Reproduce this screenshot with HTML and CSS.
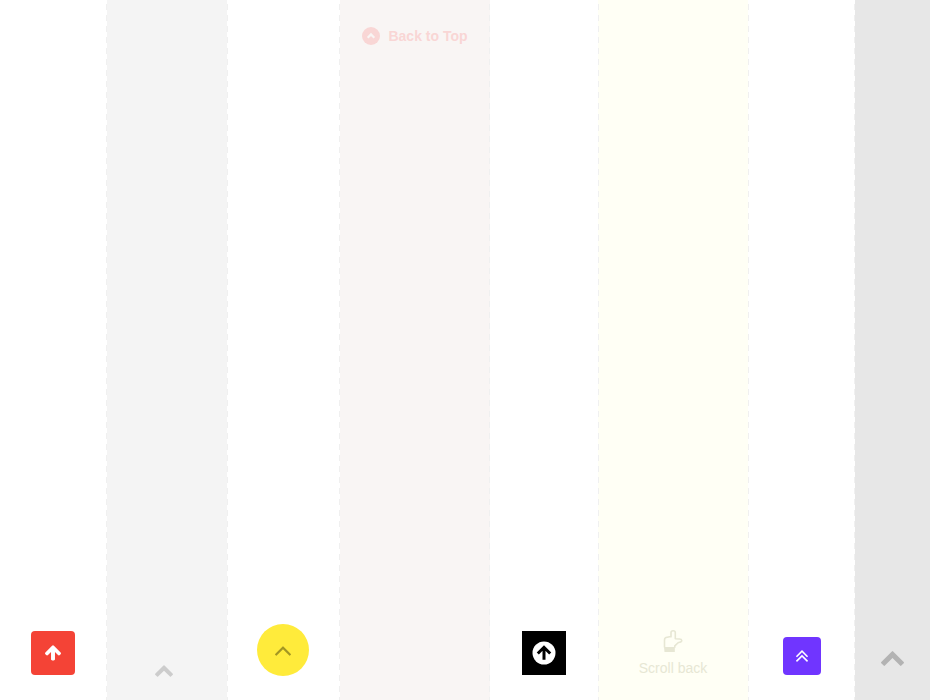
FILE: index.html
```html
<!DOCTYPE html>
<html lang="en">
<head>
<meta charset="utf-8">
<title>Back to top buttons</title>
<link rel="stylesheet" href="styles.css">
</head>
<body>
<main class="columns">
  <section class="column dash-right">
    <a class="button red"><svg width="16" height="16" viewBox="117 160 1558 1558"><path d="M1675 971q0 51-37 90l-75 75q-38 38-91 38-54 0-90-38l-294-293v704q0 52-37.5 84.5t-90.5 32.5h-128q-53 0-90.5-32.5t-37.5-84.5v-704l-294 293q-36 38-90 38t-90-38l-75-75q-38-38-38-90 0-53 38-91l651-651q35-37 90-37 54 0 91 37l651 651q37 39 37 91z"/></svg></a>
  </section>
  <section class="column gray dash-right">
    <a class="plain"><svg width="18" height="12" viewBox="90 480 1612 1036"><path d="M1683 1331l-166 165q-19 19-45 19t-45-19l-531-531-531 531q-19 19-45 19t-45-19l-166-165q-19-19-19-45.500t19-45.500l742-741q19-19 45-19t45 19l742 741q19 19 19 45.500t-19 45.500z"/></svg></a>
  </section>
  <section class="column dash-right">
    <a class="button yellow"><svg width="16" height="10" viewBox="397 670 998 610"><path d="M1395 1184q0 13-10 23l-50 50q-10 10-23 10t-23-10l-393-393-393 393q-10 10-23 10t-23-10l-50-50q-10-10-10-23t10-23l466-466q10-10 23-10t23 10l466 466q10 10 10 23z"/></svg></a>
  </section>
  <section class="column pink dash-right">
    <a class="label"><svg width="18" height="18" viewBox="0 0 18 18"><circle cx="9" cy="9" r="9"/><path class="cutout" d="m5.700 10.700 3.300-3.300 3.300 3.300" stroke-width="2.200"/></svg><span>Back to Top</span></a>
  </section>
  <section class="column">
    <a class="button black"><svg width="24" height="24" viewBox="0 0 24 24"><circle cx="12" cy="12" r="11.500"/><path class="cutout" d="m5.800 12.500 6.200-6.200 6.200 6.200M12 7v11.700" stroke-width="3"/></svg></a>
  </section>
  <section class="column ivory dash-left dash-right">
    <a class="scroll"><svg width="20" height="23" viewBox="0 0 20 23"><path d="M1.500 17.500V10c0-1.800 1.200-2.700 2.700-2.700.9-.6 2.200-.7 3.800-.5V2.600C8 .2 12.300.2 12.300 2.600v6.200l4.200.2c2.800.1 2.900 2.700.8 3.100l-2.200.6-3.300 3.200v1.800" fill="none" stroke="#e7e7d4" stroke-width="1.600" stroke-linejoin="round"/><path d="M1 17h10.800v5H1.500z"/></svg><span>Scroll back</span></a>
  </section>
  <section class="column dash-right">
    <a class="button purple"><svg width="12" height="12" viewBox="397 421 998 982"><path d="M1395 1312q0 13-10 23l-50 50q-10 10-23 10t-23-10l-393-393-393 393q-10 10-23 10t-23-10l-50-50q-10-10-10-23t10-23l466-466q10-10 23-10t23 10l466 466q10 10 10 23zm0-384q0 13-10 23l-50 50q-10 10-23 10t-23-10l-393-393-393 393q-10 10-23 10t-23-10l-50-50q-10-10-10-23t10-23l466-466q10-10 23-10t23 10l466 466q10 10 10 23z"/></svg></a>
  </section>
  <section class="column silver">
    <a class="plain large"><svg width="23" height="15" viewBox="90 480 1612 1036"><path d="M1683 1331l-166 165q-19 19-45 19t-45-19l-531-531-531 531q-19 19-45 19t-45-19l-166-165q-19-19-19-45.500t19-45.500l742-741q19-19 45-19t45 19l742 741q19 19 19 45.500t-19 45.500z"/></svg></a>
  </section>
</main>
</body>
</html>
```
FILE: styles.css
```css
* { box-sizing: border-box; }
body { margin: 0; background: #fff; font-family: "Liberation Sans", Arial, sans-serif; }
svg { display: block; fill: currentColor; }
.columns { display: grid; grid-template-columns: 107px 121px 112px 150px 108px 151px 106px 75px; height: 700px; overflow: hidden; }
.column {
  --dash: repeating-linear-gradient(#fff0 0 4px, #f0f0f0 4px 10px, #fff0 10px 11px);
  display: flex;
  align-items: flex-end;
  justify-content: center;
}
.dash-right { padding-right: 1px; background: var(--dash) right / 1px 100% no-repeat; }
.gray { background: var(--dash) right / 1px 100% no-repeat, linear-gradient(#f4f4f4, #f4f4f4) left / calc(100% - 1px) 100% no-repeat; }
.pink { align-items: flex-start; background-color: #f9f5f4; }
.ivory {
  padding-left: 1px;
  background: var(--dash) left / 1px 100% no-repeat, var(--dash) right / 1px 100% no-repeat, linear-gradient(#fffff5, #fffff5) left / calc(100% - 1px) 100% no-repeat;
}
.silver { background: #e7e7e7; }
.button { display: flex; align-items: center; justify-content: center; width: 44px; height: 44px; margin-bottom: 25px; color: #fff; }
.red { background: #f44336; border-radius: 4px; }
.yellow { width: 52px; height: 52px; margin: 0 1px 24px 0; border-radius: 50%; background: #ffeb3b; color: #a39623; }
.yellow svg { margin-top: 1px; }
.black { background: #000; }
.purple { width: 38px; height: 38px; border-radius: 4px; background: #7035ff; }
.purple svg { width: 12px; height: 12px; }
.plain { margin: 0 6px 23px 0; color: #ccc; }
.large { margin: 0 0 34px; color: #b3b3b3; }
.label { display: flex; align-items: center; gap: 8px; margin-top: 27px; margin-left: 1px; color: #f9d6d5; font-size: 14px; font-weight: 700; line-height: 18px; white-space: nowrap; }
.cutout { fill: none; stroke: #000; }
.label .cutout { stroke: #f9f5f4; }
.scroll { display: flex; flex-direction: column; align-items: center; gap: 7px; margin: 0 1px 24px 0; color: #e7e7d4; font-size: 14px; line-height: 16px; white-space: nowrap; }
```
